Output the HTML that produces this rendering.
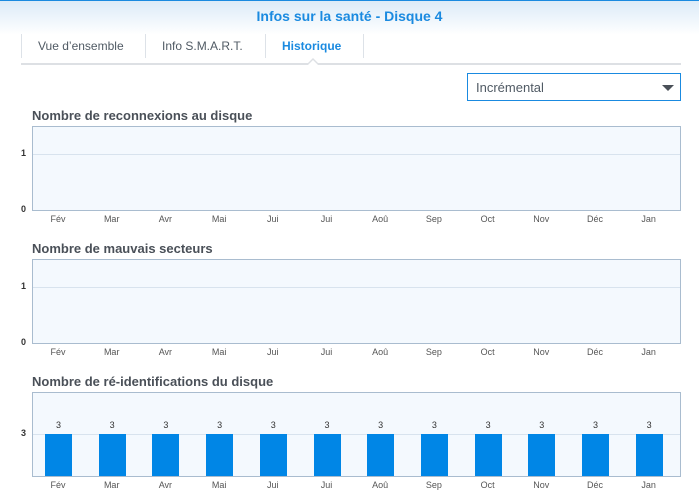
<!DOCTYPE html><html><head><meta charset="utf-8"><style>
body{margin:0;width:699px;height:501px;overflow:hidden;background:#fff;font-family:"Liberation Sans",sans-serif;position:relative}
.a{position:absolute}
.hdr{left:0;top:0;width:699px;height:34px;border-top:1px solid #1a8ae0;background:linear-gradient(#dcebf8,#fff)}
.title{left:0;width:699px;top:8px;text-align:center;color:#1a8ae0;font-weight:bold;font-size:14px}
.tab{top:38px;font-size:12px;color:#505a64;height:20px;line-height:16px}
.sep{top:34px;width:1px;height:24px;background:#dde2e8}
.ct{font-size:13px;font-weight:bold;color:#4a5058;left:32px}
.box{left:32px;width:647px;height:83px;border:1px solid #a9bccf;background:#f4f9fe}
.gl{left:0;width:647px;height:1px;background:#d8e3ee}
.yl{font-size:9px;color:#333;width:26px;text-align:right;left:0}
.xl{font-size:9px;color:#555;width:40px;text-align:center}
.bar{width:27px;height:42px;background:#0086e6;top:41px}
.bv{font-size:9px;color:#333;width:27px;text-align:center;top:27px}
</style></head><body>
<div class="a hdr"></div>
<div class="a title">Infos sur la santé - Disque 4</div>
<div class="a sep" style="left:21px"></div>
<div class="a sep" style="left:145px"></div>
<div class="a sep" style="left:265px"></div>
<div class="a sep" style="left:363px"></div>
<div class="a tab" style="left:38px">Vue d’ensemble</div>
<div class="a tab" style="left:162px">Info S.M.A.R.T.</div>
<div class="a tab" style="left:282px;color:#1a8ae0;font-weight:bold">Historique</div>
<div class="a" style="left:21px;top:63px;width:660px;height:2px;background:#dde0e4"></div>
<div class="a" style="left:307px;top:58px;width:0;height:0;border-left:6px solid transparent;border-right:6px solid transparent;border-bottom:6px solid #dde0e4"></div>
<div class="a" style="left:308px;top:60px;width:0;height:0;border-left:5px solid transparent;border-right:5px solid transparent;border-bottom:5px solid #fff"></div>
<div class="a" style="left:467px;top:73px;width:212px;height:26px;border:1px solid #1a8ae0;background:#fff"></div>
<div class="a" style="left:476px;top:80px;font-size:13px;color:#505a64">Incrémental</div>
<div class="a" style="left:662px;top:85px;width:0;height:0;border-left:6px solid transparent;border-right:6px solid transparent;border-top:6px solid #4a5058"></div>
<div id="c"></div>
<script>
var m=["Fév","Mar","Avr","Mai","Jui","Jui","Aoû","Sep","Oct","Nov","Déc","Jan"];
var tops=[108,241,374],titles=["Nombre de reconnexions au disque","Nombre de mauvais secteurs","Nombre de ré-identifications du disque"];
var h="";
for(var i=0;i<3;i++){var t=tops[i];
h+='<div class="a ct" style="top:'+t+'px">'+titles[i]+'</div>';
h+='<div class="a box" style="top:'+(t+18)+'px">';
if(i<2){h+='<div class="a gl" style="top:27px"></div>';}
else{h+='<div class="a gl" style="top:41px"></div>';
for(var j=0;j<12;j++){h+='<div class="a bar" style="left:'+(12+j*53.7)+'px"></div><div class="a bv" style="left:'+(12+j*53.7)+'px">3</div>';}}
h+='</div>';
if(i<2){h+='<div class="a yl" style="top:'+(t+40)+'px;font-weight:bold">1</div><div class="a yl" style="top:'+(t+96)+'px;font-weight:bold">0</div>';}
else h+='<div class="a yl" style="top:'+(t+54)+'px;font-weight:bold">3</div>';
for(var j=0;j<12;j++)h+='<div class="a xl" style="left:'+(38+j*53.7)+'px;top:'+(t+106)+'px">'+m[j]+'</div>';
}
document.getElementById("c").innerHTML=h;
</script>
</body></html>
